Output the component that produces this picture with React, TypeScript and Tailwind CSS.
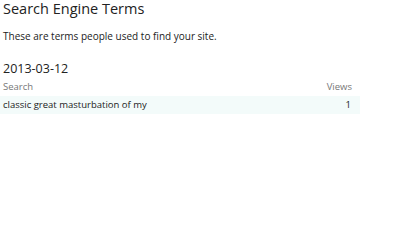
const rows = [{ term: "classic great masturbation of my", views: 1 }];

export default function App() {
  return (
    <div className="w-[400px] h-[252px] bg-white text-[#222] font-['Open_Sans',sans-serif] pl-[3px]">
      <h2 className="text-[14.5px] leading-[18px]">Search Engine Terms</h2>
      <p className="mt-[11px] text-[10px] leading-[14px]">
        These are terms people used to find your site.
      </p>

      <div className="mt-[17px] w-[360px]">
        <h3 className="text-[12.5px] leading-[18px]">2013-03-12</h3>
        <div className="mt-[2px] flex justify-between text-[9.5px] leading-[14px] text-[#777] pr-[11px]">
          <span>Search</span>
          <span>Views</span>
        </div>
        <table className="w-full mt-[2px] -ml-[3px] text-[9.5px]">
          <tbody>
            {rows.map((r) => (
              <tr key={r.term} className="bg-[#f3fbfa]">
                <td className="h-[18px] pl-[3px]">{r.term}</td>
                <td className="h-[18px] pr-[9px] text-right">{r.views}</td>
              </tr>
            ))}
          </tbody>
        </table>
      </div>
    </div>
  );
}
